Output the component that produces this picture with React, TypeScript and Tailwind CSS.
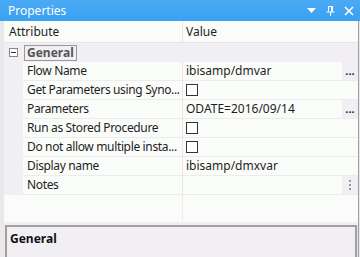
import React from "react";

type Row = { label: string; kind: "text" | "check"; value?: string; button?: "dots" | "vdots" };

const rows: Row[] = [
  { label: "Flow Name", kind: "text", value: "ibisamp/dmvar", button: "dots" },
  { label: "Get Parameters using Syno...", kind: "check" },
  { label: "Parameters", kind: "text", value: "ODATE=2016/09/14", button: "dots" },
  { label: "Run as Stored Procedure", kind: "check" },
  { label: "Do not allow multiple insta...", kind: "check" },
  { label: "Display name", kind: "text", value: "ibisamp/dmxvar" },
  { label: "Notes", kind: "text", value: "", button: "vdots" },
];

function TitleBar() {
  return (
    <div className="flex h-[21px] items-center justify-between bg-gradient-to-b from-[#4aaaf4] to-[#3aa0f2] pl-[8px] pr-[6px] text-white">
      <span className="text-[12px] leading-none">Properties</span>
      <div className="flex items-center gap-[9px]">
        <svg width="10" height="6" viewBox="0 0 10 6">
          <path d="M0 0h9L4.5 5z" fill="white" />
        </svg>
        <svg width="9" height="10" viewBox="0 0 9 10">
          <path d="M2 0.5h5M2.5 0.5v5M6.5 0.5v5M0.5 6h8M4.5 6v4" stroke="white" strokeWidth="1" fill="none" />
          <rect x="5" y="1" width="1.5" height="4.5" fill="white" />
        </svg>
        <svg width="10" height="10" viewBox="0 0 10 10">
          <path d="M1 1l8 8M9 1l-8 8" stroke="white" strokeWidth="1.6" />
        </svg>
      </div>
    </div>
  );
}

function Checkbox() {
  return <div className="h-[12px] w-[12px] border border-[#333] bg-white" />;
}

function GridRow({ row }: { row: Row }) {
  return (
    <div className="flex h-[19px]">
      <div className="w-[19px] shrink-0 bg-[#f1eff3]" />
      <div className="flex w-[159px] shrink-0 items-center whitespace-nowrap border-b border-[#ecece8] bg-[#fafcfa] pl-[4px] tracking-[-0.35px]">
        {row.label}
      </div>
      <div className="w-px shrink-0 bg-[#e6e6e6]" />
      <div className="flex flex-1 items-center border-b border-[#ecece8] bg-[#fafcfa]">
        <div className="flex flex-1 items-center pl-[3px]">
          {row.kind === "check" ? <Checkbox /> : <span>{row.value}</span>}
        </div>
        {row.button === "dots" && (
          <div className="flex h-full w-[16px] items-end justify-center bg-[#f1eff3] pb-[4px] text-[11px] font-bold leading-none text-[#202040]">
            ...
          </div>
        )}
        {row.button === "vdots" && (
          <div className="flex h-full w-[16px] flex-col items-center justify-center gap-[2px] bg-[#f1eff3]">
            <div className="h-[2px] w-[2px] bg-[#999]" />
            <div className="h-[2px] w-[2px] bg-[#999]" />
            <div className="h-[2px] w-[2px] bg-[#999]" />
          </div>
        )}
      </div>
    </div>
  );
}

export default function App() {
  return (
    <div
      className="flex h-[257px] w-[360px] flex-col overflow-hidden bg-[#e9e9ec] text-[12px] text-[#1e1e1e]"
      style={{ fontFamily: '"Noto Sans", "Open Sans", sans-serif' }}
    >
      <TitleBar />
      <div className="flex flex-1">
        <div className="flex flex-1 flex-col pl-[4px]">
          <div className="flex flex-1 flex-col bg-[#fafcfa]">
            {/* header */}
            <div className="flex h-[22px] border-b border-[#e6e6e6]">
              <div className="flex w-[178px] items-center pl-[5px]">Attribute</div>
              <div className="w-px bg-[#e6e6e6]" />
              <div className="flex flex-1 items-center pl-[3px]">Value</div>
            </div>
            {/* category */}
            <div className="flex h-[19px] items-center bg-[#f1eff3]">
              <div className="ml-[5px] flex h-[9px] w-[9px] items-center justify-center border border-[#888] bg-white">
                <div className="h-px w-[5px] bg-[#333]" />
              </div>
              <div className="ml-[6px] flex h-[16px] items-center border border-[#999] px-[2px] font-bold text-[#555]">
                General
              </div>
            </div>
            {rows.map((r) => (
              <GridRow key={r.label} row={r} />
            ))}
            <div className="flex flex-1">
              <div className="w-[178px]" />
              <div className="w-px bg-[#ececec]" />
            </div>
          </div>
          <div className="h-[3px] bg-[#f1eff3]" />
          <div className="ml-[1px] mr-[1px] h-[32px] border-2 border-b-0 border-[#a0a0a0] bg-[#f1eff3] pl-[3px] pt-[3px]">
            <span className="font-bold text-[#111]">General</span>
          </div>
        </div>
        <div className="w-px bg-[#a0a0a0]" />
        <div className="w-px" />
      </div>
    </div>
  );
}
